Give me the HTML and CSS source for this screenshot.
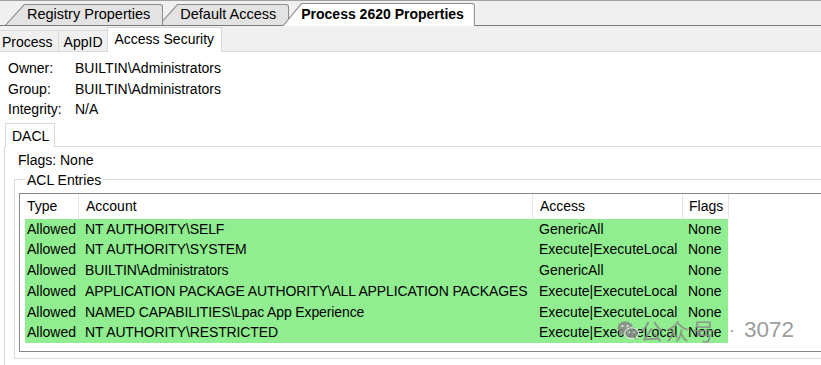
FILE: index.html
```html
<!DOCTYPE html>
<html lang="en">
<head>
  <meta charset="UTF-8">
  <title>Process 2620 Properties</title>
  <link rel="stylesheet" href="styles.css">
</head>
<body>
  <div class="page">
    <div class="doc-strip">
      <div class="doc-tab tab-1"><span>Registry Properties</span></div>
      <div class="doc-tab tab-2"><span>Default Access</span></div>
      <div class="doc-tab doc-active"><span>Process 2620 Properties</span></div>
    </div>

    <div class="sub-strip">
      <div class="sub-tab">Process</div>
      <div class="sub-tab">AppID</div>
      <div class="sub-tab sub-active">Access Security</div>
    </div>

    <div class="info">
      <div class="info-label">Owner:</div><div>BUILTIN\Administrators</div>
      <div class="info-label">Group:</div><div>BUILTIN\Administrators</div>
      <div class="info-label">Integrity:</div><div>N/A</div>
    </div>

    <div class="dacl-tab">DACL</div>
    <div class="dacl-panel">
      <div class="flags">Flags: None</div>
      <fieldset class="group">
        <legend>ACL Entries</legend>
        <div class="listview">
          <div class="lv-head">
            <div class="col-type">Type</div>
            <div class="col-account">Account</div>
            <div class="col-access">Access</div>
            <div class="col-flags">Flags</div>
          </div>
          <div class="lv-row">
            <div class="col-type">Allowed</div>
            <div class="col-account">NT AUTHORITY\SELF</div>
            <div class="col-access">GenericAll</div>
            <div class="col-flags">None</div>
          </div>
          <div class="lv-row">
            <div class="col-type">Allowed</div>
            <div class="col-account">NT AUTHORITY\SYSTEM</div>
            <div class="col-access">Execute|ExecuteLocal</div>
            <div class="col-flags">None</div>
          </div>
          <div class="lv-row">
            <div class="col-type">Allowed</div>
            <div class="col-account">BUILTIN\Administrators</div>
            <div class="col-access">GenericAll</div>
            <div class="col-flags">None</div>
          </div>
          <div class="lv-row">
            <div class="col-type">Allowed</div>
            <div class="col-account">APPLICATION PACKAGE AUTHORITY\ALL APPLICATION PACKAGES</div>
            <div class="col-access">Execute|ExecuteLocal</div>
            <div class="col-flags">None</div>
          </div>
          <div class="lv-row">
            <div class="col-type">Allowed</div>
            <div class="col-account">NAMED CAPABILITIES\Lpac App Experience</div>
            <div class="col-access">Execute|ExecuteLocal</div>
            <div class="col-flags">None</div>
          </div>
          <div class="lv-row">
            <div class="col-type">Allowed</div>
            <div class="col-account">NT AUTHORITY\RESTRICTED</div>
            <div class="col-access">Execute|ExecuteLocal</div>
            <div class="col-flags">None</div>
          </div>
        </div>
      </fieldset>
    </div>

    <div class="watermark">
      <svg class="wm-icon" width="22" height="21" viewBox="0 0 24 22">
        <ellipse cx="9" cy="8" rx="8.5" ry="7" fill="#8a8a8a"/>
        <path d="M3 13 L2 17 L7 14 Z" fill="#8a8a8a"/>
        <ellipse cx="16" cy="14" rx="7.5" ry="6" fill="#8a8a8a" stroke="#fff" stroke-width="1.2"/>
        <path d="M20 18 L22 21 L17 19 Z" fill="#8a8a8a"/>
        <circle cx="6" cy="6" r="1.1" fill="#fff"/>
        <circle cx="11.5" cy="6" r="1.1" fill="#fff"/>
        <circle cx="13.5" cy="13" r="0.9" fill="#fff"/>
        <circle cx="18.5" cy="13" r="0.9" fill="#fff"/>
      </svg>
      <span class="wm-name">公众号</span>
      <span class="wm-dot">·</span>
      <span class="wm-num">3072</span>
    </div>
  </div>
</body>
</html>
```

FILE: styles.css
```css
html, body {
  margin: 0;
  overflow: hidden;
}

body {
  background-color: #fff;
  font-family: "Liberation Sans", Arial, sans-serif;
  font-size: 14px;
  color: #000;
}

.page {
  position: relative;
  width: 860px;
  height: 365px;
}

/* document tabs */
.doc-strip {
  display: flex;
  align-items: flex-end;
  height: 24px;
  padding-left: 5px;
  background-color: #f0f0f0;
  border-top: 1px solid #a0a0a0;
  border-bottom: 1px solid #7a7a7a;
}

.doc-tab {
  position: relative;
  height: 21px;
  padding: 1px 1px 0 0;
  box-sizing: border-box;
  background-color: #8c8c8c;
  border-top-right-radius: 3px;
  clip-path: polygon(0 100%, 19px 0, 100% 0, 100% 100%);
}

.doc-tab span {
  display: block;
  height: 100%;
  padding: 0 12px 0 22px;
  line-height: 19px;
  font-size: 14.5px;
  background-color: #e3e3e3;
  border-top-right-radius: 2px;
  clip-path: polygon(1.4px 100%, 19.6px 0, 100% 0, 100% 100%);
}

.tab-1 {
  z-index: 3;
}

.tab-2 {
  z-index: 2;
  margin-left: -5px;
}

.doc-active {
  z-index: 4;
  height: 23px;
  margin-left: -7px;
  margin-bottom: -1px;
}

.doc-active span {
  padding: 0 10px 0 19px;
  line-height: 21px;
  font-size: 14px;
  font-weight: bold;
  background-color: #fff;
}

/* property page tabs */
.sub-strip {
  display: flex;
  align-items: flex-end;
  height: 25px;
  padding-left: 0;
  margin-left: -3px;
  background-color: #f0f0f0;
  border-bottom: 1px solid #d9d9d9;
}

.sub-tab {
  height: 21px;
  line-height: 22px;
  padding: 0 5px;
  border-top: 1px solid #d9d9d9;
  border-right: 1px solid #d9d9d9;
  box-sizing: border-box;
}

.sub-active {
  height: 25px;
  line-height: 22px;
  padding: 0 7px;
  margin: 0 0 -1px -2px;
  background-color: #fff;
  border-left: 1px solid #d9d9d9;
}

/* owner info */
.info {
  display: grid;
  grid-template-columns: 67px auto;
  padding: 6px 0 0 8px;
  line-height: 20.5px;
}

/* dacl tab page */
.dacl-tab {
  position: relative;
  z-index: 1;
  width: 50px;
  height: 24px;
  box-sizing: border-box;
  margin: 3px 0 -1px 5px;
  padding-left: 6px;
  line-height: 24px;
  background-color: #fff;
  border: 1px solid #d9d9d9;
  border-bottom: none;
}

.dacl-panel {
  margin-left: 4px;
  padding: 5px 0 0 9px;
  border-top: 1px solid #d9d9d9;
  border-left: 1px solid #d9d9d9;
  height: 220px;
}

.flags {
  margin-left: 4px;
  line-height: 17px;
}

.group {
  margin: 3px 0 0 0;
  padding: 5px 0 6px 4px;
  border: 1px solid #d9d9d9;
  border-right: none;
}

.group legend {
  margin-left: 6px;
  padding: 0 2px;
  line-height: 16px;
}

.listview {
  border: 1px solid #828790;
  border-right: none;
  padding-bottom: 8px;
}

.lv-head {
  display: flex;
  height: 25px;
  line-height: 25px;
}

.lv-head div {
  border-right: 1px solid #e5e5e5;
  padding-left: 7px;
  box-sizing: border-box;
}

.lv-row {
  display: flex;
  width: 703px;
  margin-left: 5px;
  height: 20.8px;
  line-height: 21px;
  background-color: #90ee90;
  white-space: nowrap;
}

.lv-row div {
  padding-left: 7px;
  box-sizing: border-box;
}

.lv-head .col-type {
  width: 59px;
}

.lv-row .col-type {
  width: 53px;
  padding-left: 2px;
}

.col-account {
  width: 454px;
}

.lv-row .col-account {
  letter-spacing: -0.12px;
}

.col-access {
  width: 150px;
}

.col-flags {
  width: 46px;
}

.lv-head .col-flags {
  padding-left: 6px;
}

.lv-row .col-flags {
  padding-left: 6px;
}

/* watermark over the table */
.watermark {
  position: absolute;
  left: 617px;
  top: 316px;
  display: flex;
  align-items: center;
  gap: 1px;
  opacity: 0.85;
  color: #8c8c8c;
  pointer-events: none;
}

.wm-name {
  font-family: "Noto Sans CJK SC", sans-serif;
  font-size: 23px;
  letter-spacing: 3px;
  line-height: 28px;
}

.wm-dot {
  margin: 0 8px 0 10px;
  font-size: 18px;
}

.wm-num {
  font-size: 22.5px;
  line-height: 28px;
}
```
